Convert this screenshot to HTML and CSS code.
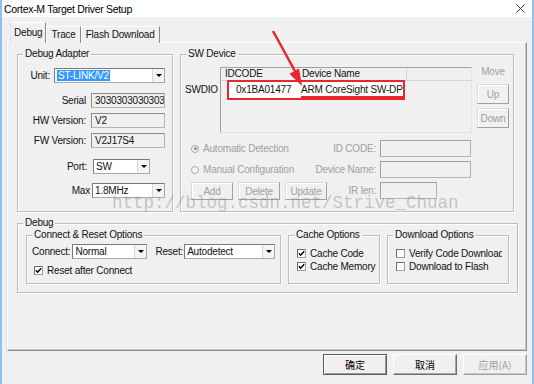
FILE: index.html
```html
<!DOCTYPE html>
<html lang="en">
<head>
    <meta charset="UTF-8">
    <meta name="viewport" content="width=device-width, initial-scale=1.0">
    <title>Cortex-M Target Driver Setup</title>
    <link rel="stylesheet" href="styles.css">
</head>
<body>
    <div class="window">
        <div class="titlebar">
            <span class="title">Cortex-M Target Driver Setup</span>
            <svg class="close" width="9" height="9" viewBox="0 0 9 9"><path d="M0.5 0.5 L8.5 8.5 M8.5 0.5 L0.5 8.5" stroke="#333" stroke-width="1" fill="none"/></svg>
        </div>

        <div class="tabs">
            <div class="tab active">Debug</div>
            <div class="tab">Trace</div>
            <div class="tab">Flash Download</div>
        </div>

        <div class="panel">
            <div class="top-row">
                <fieldset class="group adapter">
                    <legend>Debug Adapter</legend>
                    <div class="field unit-row">
                        <label class="lbl-unit">Unit:</label>
                        <div class="combo w-unit"><span class="value"><span class="sel">ST-LINK/V2</span></span><span class="drop"></span></div>
                    </div>
                    <div class="field mt10">
                        <label class="lbl">Serial</label>
                        <div class="textbox">303030303030303</div>
                    </div>
                    <div class="field mt5">
                        <label class="lbl">HW Version:</label>
                        <div class="textbox">V2</div>
                    </div>
                    <div class="field mt5">
                        <label class="lbl">FW Version:</label>
                        <div class="textbox">V2J17S4</div>
                    </div>
                    <div class="field mt11">
                        <label class="lbl lbl-port">Port:</label>
                        <div class="combo w-port"><span class="value">SW</span><span class="drop"></span></div>
                    </div>
                    <div class="field mt9">
                        <label class="lbl lbl-max">Max</label>
                        <div class="combo w-max"><span class="value">1.8MHz</span><span class="drop"></span></div>
                    </div>
                </fieldset>

                <fieldset class="group sw">
                    <legend>SW Device</legend>
                    <div class="sw-top">
                        <div class="swdio">SWDIO</div>
                        <div class="list">
                            <div class="list-head">
                                <div class="hcol hcol1">IDCODE</div>
                                <div class="hcol hcol2">Device Name</div>
                            </div>
                            <div class="list-row">
                                <div class="cell-id">0x1BA01477</div>
                                <div class="cell-name">ARM CoreSight SW-DP</div>
                            </div>
                        </div>
                        <div class="move">
                            <div class="move-label">Move</div>
                            <button class="btn-small btn-up" disabled>Up</button>
                            <button class="btn-small btn-down" disabled>Down</button>
                        </div>
                    </div>
                    <div class="sw-grid">
                        <div class="radio"><span class="dot on"></span>Automatic Detection</div>
                        <div class="glabel">ID CODE:</div>
                        <div class="gin"></div>
                        <div class="radio"><span class="dot"></span>Manual Configuration</div>
                        <div class="glabel">Device Name:</div>
                        <div class="gin"></div>
                        <div class="btn-row">
                            <button class="btn-small" disabled>Add</button>
                            <button class="btn-small" disabled>Delete</button>
                            <button class="btn-small" disabled>Update</button>
                        </div>
                        <div class="glabel ir">IR len:</div>
                        <div class="gin short ir-in"></div>
                    </div>
                </fieldset>
            </div>

            <fieldset class="group debug">
                <legend>Debug</legend>
                <div class="debug-inner">
                    <fieldset class="group connect">
                        <legend>Connect &amp; Reset Options</legend>
                        <div class="conn-row">
                            <label class="lbl-conn">Connect:</label>
                            <div class="combo w-conn"><span class="value">Normal</span><span class="drop"></span></div>
                            <label class="lbl-reset">Reset:</label>
                            <div class="combo w-reset"><span class="value">Autodetect</span><span class="drop"></span></div>
                        </div>
                        <div class="check-row reset-after">
                            <span class="check"><svg width="7" height="7" viewBox="0 0 7 7"><path d="M0.8 3.3 L2.6 5.2 L6.2 1.2" stroke="#000" stroke-width="1.4" fill="none"/></svg></span>Reset after Connect
                        </div>
                    </fieldset>
                    <fieldset class="group cache">
                        <legend>Cache Options</legend>
                        <div class="checks">
                            <div class="check-row">
                                <span class="check"><svg width="7" height="7" viewBox="0 0 7 7"><path d="M0.8 3.3 L2.6 5.2 L6.2 1.2" stroke="#000" stroke-width="1.4" fill="none"/></svg></span>Cache Code
                            </div>
                            <div class="check-row">
                                <span class="check"><svg width="7" height="7" viewBox="0 0 7 7"><path d="M0.8 3.3 L2.6 5.2 L6.2 1.2" stroke="#000" stroke-width="1.4" fill="none"/></svg></span>Cache Memory
                            </div>
                        </div>
                    </fieldset>
                    <fieldset class="group download">
                        <legend>Download Options</legend>
                        <div class="checks">
                            <div class="check-row clip">
                                <span class="check"></span>Verify Code Download
                            </div>
                            <div class="check-row">
                                <span class="check"></span>Download to Flash
                            </div>
                        </div>
                    </fieldset>
                </div>
            </fieldset>
        </div>

        <div class="footer">
            <button class="btn default">确定</button>
            <button class="btn">取消</button>
            <button class="btn" disabled>应用(A)</button>
        </div>

        <!-- screenshot annotations -->
        <svg class="arrow" width="534" height="384" viewBox="0 0 534 384">
            <line x1="273" y1="31" x2="296" y2="73" stroke="#e8262c" stroke-width="2.5"/>
            <polygon points="302,86 289.5,73.8 299,68.6" fill="#e8262c"/>
        </svg>
        <div class="watermark">http://blog.csdn.net/Strive_Chuan</div>
    </div>
</body>
</html>
```

FILE: styles.css
```css
* {
    box-sizing: border-box;
}
body {
    margin: 0;
    background: #f0f0f0;
    font-family: "Liberation Sans", Arial, sans-serif;
    font-size: 10px;
    letter-spacing: -0.2px;
    color: #111;
}
.window {
    position: relative;
    width: 534px;
    height: 384px;
    border-left: 2px solid #8dc2ee;
    border-right: 2px solid #8dc2ee;
    background: #f0f0f0;
    overflow: hidden;
}
.titlebar {
    height: 17px;
    background: #fff;
    display: flex;
    align-items: center;
    justify-content: space-between;
    padding: 0 7px 0 2px;
}
.title {
    font-size: 10.5px;
    letter-spacing: -0.3px;
    color: #000;
}

/* tabs */
.tabs {
    display: flex;
    align-items: flex-end;
    height: 21px;
    margin-top: 5px;
    padding-left: 8px;
    position: relative;
    z-index: 1;
}
.tab {
    height: 17px;
    line-height: 16px;
    padding: 0 4px;
    border: 1px solid #fff;
    border-bottom: none;
    border-right-color: #8a8a8a;
    background: #f0f0f0;
}
.tab.active {
    height: 21px;
    line-height: 19px;
    padding: 0 3px;
    border-left-color: #e0e0e0;
}
.panel {
    margin: -1px 0 0 5px;
    width: 520px;
    height: 309px;
    border: 1px solid;
    border-color: #fff #8a8a8a #8a8a8a #fff;
    box-shadow: inset -1px -1px 0 #c8c8c8, -1px 0 0 #dcdcdc;
    padding: 5px 0 0 9px;
}

/* group boxes */
.group {
    margin: 0;
    padding: 0;
    min-width: 0;
    border: 1px solid #bdbdbd;
    box-shadow: inset 1px 1px 0 #fff, 1px 1px 0 #fff;
}
.group legend {
    padding: 0 2px;
    margin-left: 5px;
    line-height: 12px;
    background: #f0f0f0;
}
.top-row {
    display: flex;
    gap: 7px;
    height: 164px;
}
.adapter {
    width: 156px;
}
.sw {
    width: 334px;
}

/* debug adapter fields */
.field {
    display: flex;
    align-items: center;
    height: 15px;
}
.unit-row {
    margin-top: 8px;
}
.mt5 { margin-top: 5px; }
.mt9 { margin-top: 9px; }
.mt10 { margin-top: 10px; }
.mt11 { margin-top: 11px; }
.lbl-unit {
    width: 36px;
    padding-right: 4px;
    text-align: right;
}
.lbl {
    width: 73px;
    padding-right: 5px;
    text-align: right;
    white-space: nowrap;
}
.lbl-port {
    width: 75px;
    padding-right: 6px;
}
.lbl-max {
    width: 74px;
    padding-right: 2px;
}
.textbox {
    width: 74px;
    height: 15px;
    line-height: 13px;
    padding-left: 3px;
    border: 1px solid #b4b4b4;
    border-top-color: #8c8c8c;
    border-left-color: #8c8c8c;
    overflow: hidden;
    white-space: nowrap;
}
.combo {
    display: flex;
    height: 15px;
    border: 1px solid #a8a8a8;
    border-top-color: #7a7a7a;
    border-left-color: #7a7a7a;
    background: #fff;
}
.combo .value {
    flex: 1;
    line-height: 13px;
    padding-left: 2px;
    overflow: hidden;
    white-space: nowrap;
}
.combo .drop {
    width: 12px;
    background: #f4f4f4;
    border-left: 1px solid #d4d4d4;
    display: flex;
    align-items: center;
    justify-content: center;
}
.combo .drop::after {
    content: "";
    border-left: 3px solid transparent;
    border-right: 3px solid transparent;
    border-top: 3px solid #000;
}
.sel {
    background: #3399ff;
    color: #fff;
    padding: 0 1px;
}
.w-unit { width: 111px; }
.w-port { width: 57px; }
.w-max { width: 73px; }
.w-conn { width: 75px; }
.w-reset { width: 91px; }

/* sw device */
.sw-top {
    display: flex;
    margin-top: 7px;
    padding-left: 4px;
}
.swdio {
    width: 35px;
    margin-top: 17px;
    line-height: 12px;
}
.list {
    width: 252px;
    height: 66px;
    border: 1px solid;
    border-color: #a0a0a0 #e3e3e3 #e3e3e3 #a0a0a0;
    background: #f0f0f0;
}
.list-head {
    display: flex;
    height: 13px;
    border-bottom: 1px solid #d5d5d5;
}
.hcol {
    line-height: 12px;
    padding-left: 4px;
    border-right: 1px solid #d5d5d5;
}
.hcol1 { width: 77px; }
.hcol2 { width: 109px; }
.list-row {
    display: flex;
    margin: -1px 0 0 6px;
    width: 178px;
    height: 20px;
    border: 2px solid #e8262c;
    background: #fff;
}
.cell-id {
    width: 72px;
    padding-left: 7px;
    line-height: 16px;
}
.cell-name {
    flex: 1;
    line-height: 15px;
    border-bottom: 2px solid #e8262c;
    white-space: nowrap;
}
.move {
    margin-left: 5px;
    width: 32px;
    display: flex;
    flex-direction: column;
    align-items: center;
}
.move-label {
    margin-top: -1px;
    line-height: 12px;
    color: #a0a0a0;
}
.btn-small {
    font-family: inherit;
    font-size: 10px;
    letter-spacing: -0.2px;
    width: 42px;
    height: 18px;
    padding: 0;
    background: #f0f0f0;
    color: #a0a0a0;
    border: 1px solid;
    border-color: #dadada #a0a0a0 #a0a0a0 #dadada;
    box-shadow: inset 1px 1px 0 #fff;
}
.btn-up {
    width: 32px;
    height: 20px;
    margin-top: 6px;
}
.btn-down {
    width: 32px;
    height: 20px;
    margin-top: 4px;
}
.sw-grid {
    display: grid;
    grid-template-columns: 121px 60px 91px;
    grid-template-rows: 17px 17px 17px;
    column-gap: 4px;
    row-gap: 4px;
    margin: 7px 0 0 10px;
}
.radio {
    display: flex;
    align-items: center;
    gap: 4px;
    color: #a0a0a0;
    white-space: nowrap;
}
.dot {
    width: 8px;
    height: 8px;
    border-radius: 50%;
    border: 1px solid #a8a8a8;
    background: #f4f4f4;
    display: flex;
    align-items: center;
    justify-content: center;
}
.dot.on::after {
    content: "";
    width: 3px;
    height: 3px;
    border-radius: 50%;
    background: #8a8a8a;
}
.glabel {
    display: flex;
    align-items: center;
    justify-content: flex-end;
    color: #a0a0a0;
    white-space: nowrap;
}
.gin {
    border: 1px solid #b4b4b4;
    border-top-color: #a0a0a0;
    border-left-color: #a0a0a0;
}
.gin.short {
    width: 57px;
}
.btn-row {
    grid-column: 1 / 3;
    grid-row: 3;
    display: flex;
    gap: 5px;
}
.ir {
    grid-column: 2;
    grid-row: 3;
}
.ir-in {
    grid-column: 3;
    grid-row: 3;
}

/* debug options */
.debug {
    margin-top: 5px;
    width: 501px;
    height: 76px;
}
.debug-inner {
    display: flex;
    gap: 7px;
    padding-left: 8px;
}
.connect {
    width: 255px;
    height: 55px;
}
.cache {
    width: 92px;
    height: 55px;
}
.download {
    width: 122px;
    height: 55px;
}
.conn-row {
    display: flex;
    align-items: center;
    height: 15px;
    margin-top: 3px;
    padding-left: 5px;
}
.lbl-conn {
    margin-right: 2px;
}
.lbl-reset {
    margin: 0 1px 0 8px;
}
.check-row {
    display: flex;
    align-items: center;
    gap: 4px;
    height: 13px;
    white-space: nowrap;
}
.reset-after {
    margin-top: 5px;
    padding-left: 7px;
}
.checks {
    margin-top: 6px;
    padding-left: 8px;
}
.check {
    width: 9px;
    height: 9px;
    flex: none;
    border: 1px solid #a0a0a0;
    border-top-color: #6e6e6e;
    border-left-color: #6e6e6e;
    background: #fff;
    display: flex;
    align-items: center;
    justify-content: center;
}
.check-row.clip {
    width: 106px;
    overflow: hidden;
}

/* footer */
.footer {
    display: flex;
    justify-content: flex-end;
    gap: 6px;
    padding-right: 5px;
    margin-top: 3px;
}
.btn {
    width: 64px;
    height: 21px;
    padding: 0;
    font-family: "Noto Sans CJK SC", "Liberation Sans", sans-serif;
    font-size: 10px;
    letter-spacing: 0;
    color: #000;
    background: #f0f0f0;
    border: 1px solid;
    border-color: #fff #6e6e6e #6e6e6e #fff;
    box-shadow: inset -1px -1px 0 #a8a8a8;
}
.btn.default {
    border-color: #5a5a5a;
    box-shadow: inset 1px 1px 0 #fff, inset -1px -1px 0 #9a9a9a;
}
.btn:disabled {
    color: #a0a0a0;
    border-color: #fff #a0a0a0 #a0a0a0 #fff;
    box-shadow: inset -1px -1px 0 #c8c8c8;
}

/* annotations */
.arrow {
    position: absolute;
    top: 0;
    left: -2px;
    pointer-events: none;
}
.watermark {
    position: absolute;
    left: 110px;
    top: 194px;
    font-family: "Liberation Mono", "Courier New", monospace;
    font-size: 17.5px;
    line-height: 18px;
    letter-spacing: 0;
    color: rgba(140, 140, 140, 0.45);
    white-space: nowrap;
    pointer-events: none;
}
```
